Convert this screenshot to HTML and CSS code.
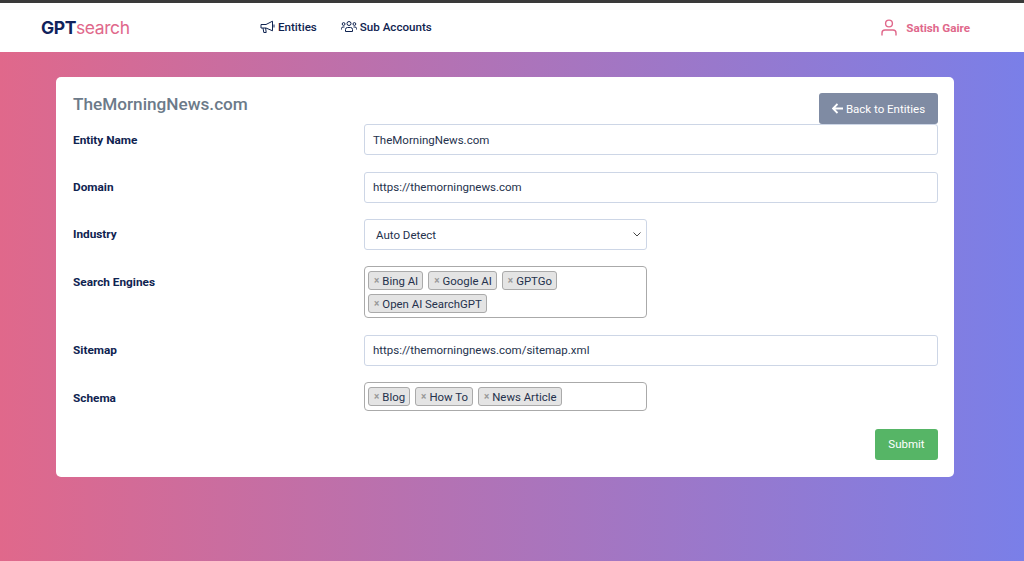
FILE: index.html
```html
<!DOCTYPE html>
<html lang="en">
<head>
<meta charset="utf-8">
<title>TheMorningNews.com</title>
<link rel="stylesheet" href="styles.css">
</head>
<body>
<header class="nav">
  <div class="logo"><b>GPT</b><span>search</span></div>
  <nav class="links">
    <a class="link"><svg class="ico" width="15" height="14" viewBox="0 0 15 14" fill="none" stroke="#0f2350" stroke-width="1"><path d="M1 4.5h5L12.5 1.2v9.6L6 8H1zM3 8l.8 4.5h2.4L5.6 8M14 4.5v3"/></svg>Entities</a>
    <a class="link"><svg class="ico" width="16" height="14" viewBox="0 0 16 14" fill="none" stroke="#0f2350" stroke-width="1"><circle cx="8" cy="3.5" r="2"/><circle cx="2.6" cy="4" r="1.4"/><circle cx="13.4" cy="4" r="1.4"/><path d="M4.5 11.5V9.5Q4.5 7.5 6.5 7.5h3q2 0 2 2v2zM.5 9.5V8.5q0-1.5 1.5-1.5h1.5M15.5 9.5V8.5q0-1.5-1.5-1.5h-1.5"/></svg>Sub Accounts</a>
  </nav>
  <div class="user"><svg width="16" height="17" viewBox="0 0 16 17" fill="none" stroke="#e0688b" stroke-width="1.4"><circle cx="8" cy="4.5" r="3.4"/><path d="M1 16.5v-2.5q0-3 3-3h8q3 0 3 3v2.5"/></svg><span>Satish Gaire</span></div>
</header>
<main class="page">
  <section class="card">
    <div class="head">
      <h1 class="title">TheMorningNews.com</h1>
      <button class="back"><svg width="11" height="11" viewBox="0 0 11 11" fill="none" stroke="#fff" stroke-width="1.8"><path d="M5.5 1 1 5.5 5.5 10M1.2 5.5H11"/></svg>Back to Entities</button>
    </div>
    <form class="form">
      <label class="lab">Entity Name</label>
      <div class="field wide">TheMorningNews.com</div>
      <label class="lab">Domain</label>
      <div class="field wide">https://themorningnews.com</div>
      <label class="lab">Industry</label>
      <div class="field narrow select">Auto Detect<svg width="8" height="5" viewBox="0 0 8 5" fill="none" stroke="#444" stroke-width="1"><path d="M.5.5 4 4 7.5.5"/></svg></div>
      <label class="lab">Search Engines</label>
      <div class="tags">
        <span class="tag"><i>×</i>Bing AI</span><span class="tag"><i>×</i>Google AI</span><span class="tag"><i>×</i>GPTGo</span><span class="tag"><i>×</i>Open AI SearchGPT</span>
      </div>
      <label class="lab">Sitemap</label>
      <div class="field wide">https://themorningnews.com/sitemap.xml</div>
      <label class="lab">Schema</label>
      <div class="tags">
        <span class="tag"><i>×</i>Blog</span><span class="tag"><i>×</i>How To</span><span class="tag"><i>×</i>News Article</span>
      </div>
    </form>
    <div class="actions"><button class="submit">Submit</button></div>
  </section>
</main>
</body>
</html>
```
FILE: styles.css
```css
* { box-sizing: border-box; }
html, body { margin: 0; height: 100%; }
body {
  display: flex;
  flex-direction: column;
  height: 561px;
  overflow: hidden;
  font-family: "Roboto", "Noto Sans", sans-serif;
  font-size: 12px;
  color: #0f2350;
  background: #fff;
}
.nav {
  height: 52px;
  flex: none;
  border-top: 3px solid #3a3a3a;
  background: #fff;
  display: flex;
  align-items: center;
  padding: 0 54px 0 41px;
}
.logo { width: 219px; margin-bottom: 1px; font-family: "Inter", sans-serif; font-size: 17.5px; letter-spacing: -0.4px; }
.logo b { font-weight: 700; color: #10235c; }
.logo span { font-weight: 400; color: #e0688b; }
.links { display: flex; gap: 24px; flex: 1; margin-bottom: 2px; }
.link { display: flex; align-items: center; gap: 3px; font-weight: 500; font-size: 11.6px; color: #0f2350; }
.user { display: flex; align-items: center; gap: 9px; font-weight: 700; font-size: 11.7px; color: #e0688b; }
.page {
  flex: 1;
  background: linear-gradient(90deg, #e0688b 0%, #7a7fe8 100%);
  padding: 25px 70px 0 56px;
}
.card {
  width: 898px;
  height: 400px;
  background: #fff;
  border-radius: 5px;
  padding: 16px 16px 16px 17px;
}
.head { display: flex; justify-content: space-between; align-items: flex-start; height: 31px; }
.title { margin: -1px 0 0; font-size: 17.2px; font-weight: 500; color: #6c7a89; line-height: 24px; }
.back {
  height: 31px;
  width: 119px;
  border: 0;
  border-radius: 3px;
  background: #7f8ba3;
  color: #fff;
  font: 400 11.5px "Roboto", sans-serif;
  display: flex;
  align-items: center;
  justify-content: center;
  gap: 3px;
}
.form {
  display: grid;
  grid-template-columns: 291px 574px;
  row-gap: 16.48px;
  margin-top: 0.05px;
  align-items: start;
}
.lab { font-weight: 700; font-size: 11.8px; line-height: 16px; color: #0f2350; padding-top: 7.5px; }
.field {
  height: 31px;
  border: 1px solid #cdd6e6;
  border-radius: 3px;
  display: flex;
  align-items: center;
  padding: 0 8px;
  font-size: 11.5px;
  color: #25324d;
  background: #fff;
}
.narrow { width: 283px; }
.select { justify-content: space-between; padding: 1px 5px 0 11px; }
.tags {
  width: 283px;
  border: 1px solid #aaa;
  border-radius: 4px;
  padding: 4px 3px;
  display: flex;
  flex-wrap: wrap;
  gap: 4px 5px;
}
.tag {
  height: 19px;
  display: inline-flex;
  align-items: center;
  padding: 0 4px 0 5px;
  background: #e4e4e4;
  border: 1px solid #aaa;
  border-radius: 3px;
  font-size: 11.4px;
  color: #25324d;
}
.tag i { font-style: normal; font-weight: 700; font-size: 10px; color: #999; margin-right: 3px; }
.actions { display: flex; justify-content: flex-end; margin-top: 17.55px; }
.submit {
  width: 63px;
  height: 31px;
  border: 0;
  border-radius: 3px;
  background: #56b566;
  color: #fff;
  font: 400 11.5px "Roboto", sans-serif;
}
```
